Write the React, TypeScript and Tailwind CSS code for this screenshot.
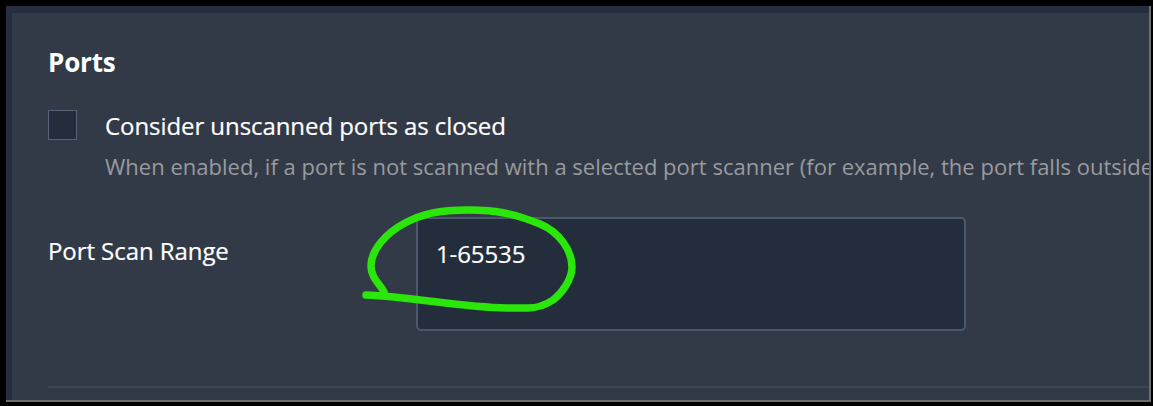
export default function App() {
  return (
    <div className="h-[406px] w-[1153px] overflow-hidden bg-black pl-[6px] pt-[6px] font-['Open_Sans','Noto_Sans',sans-serif]">
      <div className="h-[396px] w-[1145px] overflow-hidden border-b-2 border-r-2 border-[#6b6d70] bg-[#242e3e] pl-[6px] pt-[7px]">
        <section className="h-full overflow-hidden bg-[#333a47] pl-[36px] pt-[31px] text-white">
          <h2 className="h-[36px] whitespace-nowrap text-[26px] font-bold leading-[36px] tracking-[-0.2px]">
            <span>Ports</span>
          </h2>
          <div className="mt-[18px] flex">
            <div className="mt-[12px] h-[30px] w-[29px] shrink-0 border border-[#566275] bg-[#242d3b]" />
            <div className="ml-[28px] whitespace-nowrap pt-[10px]">
              <div className="h-[36px] text-[24px] leading-[36px] tracking-[-0.07px] [-webkit-text-stroke:0.2px_white]">
                <span>Consider unscanned ports as closed</span>
              </div>
              <p className="mt-[5px] h-[34px] text-[22px] leading-[34px] tracking-[0.01px] text-[#999b9e]">
                <span>When enabled, if a port is not scanned with a selected port scanner (for example, the port falls outside</span>
              </p>
            </div>
          </div>
          <div className="relative mt-[34px] flex h-[114px]">
            <label className="w-[368px] shrink-0 whitespace-nowrap pt-[16px] text-[24px] leading-[36px] tracking-[-0.07px] [-webkit-text-stroke:0.2px_white]">
              <span>Port Scan Range</span>
            </label>
            <div className="h-[114px] w-[550px] rounded-[5px] border-2 border-[#4b586b] bg-[#242d3b] pl-[18px] pt-[17px] text-[24px] leading-[36px] tracking-[-0.1px] [-webkit-text-stroke:0.2px_white]">
              <span>1-65535</span>
            </div>
            <svg
              className="absolute left-[302px] top-[-22px]"
              width="250"
              height="145"
              viewBox="0 0 250 145"
              fill="none"
              stroke="#2ae60a"
              strokeWidth="7.5"
              strokeLinecap="round"
              strokeLinejoin="round"
            >
              <path d="M34 97 C30 89 21 83 21 71 C21 55 36 38 55 28 C72 19 88 15 119 15 C147 15 165 19 190 29 C209 37 222 55 222 72 C222 85 211 99 203 105 C194 111 187 113 178 113 H156 C112 112 62 102 16 100" />
            </svg>
          </div>
          <hr className="mt-[55px] h-[2px] border-0 bg-[#3f4653]" />
        </section>
      </div>
    </div>
  );
}
